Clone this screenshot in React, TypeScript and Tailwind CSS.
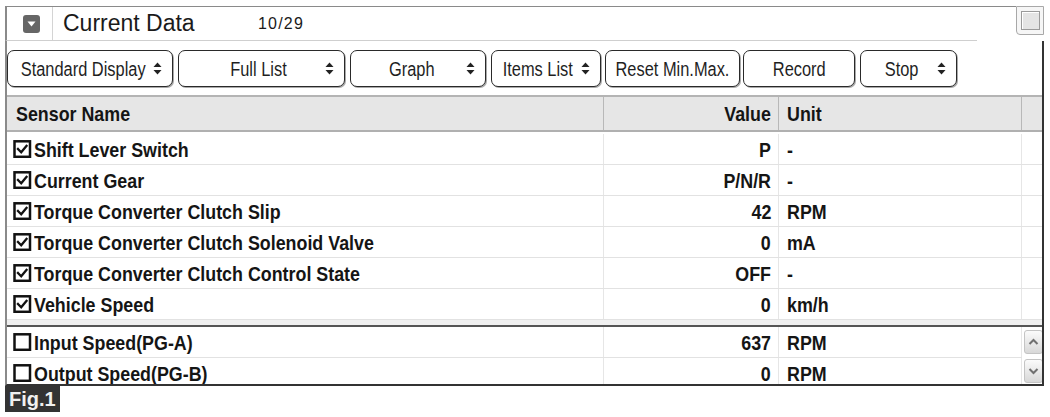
import React from "react";

const SANS = "font-['Liberation_Sans',Arial,sans-serif]";

const Spin = () => (
  <svg width="9" height="15" viewBox="0 0 9 15" className="shrink-0">
    <polygon points="0.5,6 4.5,1.5 8.5,6" fill="#222" />
    <polygon points="0.5,9 4.5,13.5 8.5,9" fill="#222" />
  </svg>
);

const Check = ({ checked }: { checked: boolean }) => (
  <svg width="19" height="18" viewBox="0 0 19 18" className="shrink-0">
    <rect x="1.5" y="1.3" width="15.5" height="15.5" fill="#fff" stroke="#111" strokeWidth="2.5" />
    {checked && (
      <path d="M5 9 L8.2 12.2 L13.5 5.8" fill="none" stroke="#111" strokeWidth="2.3" strokeLinecap="square" />
    )}
  </svg>
);

type Btn = { label: string; w: string; ml: string; spin: boolean; pl: string };

const buttons: Btn[] = [
  { label: "Standard Display", w: "w-[166px]", ml: "ml-0", spin: true, pl: "pl-[6px]" },
  { label: "Full List", w: "w-[167px]", ml: "ml-[5px]", spin: true, pl: "pl-[12px]" },
  { label: "Graph", w: "w-[136px]", ml: "ml-[5px]", spin: true, pl: "pl-[6px]" },
  { label: "Items List", w: "w-[110px]", ml: "ml-[5px]", spin: true, pl: "pl-[2px]" },
  { label: "Reset Min.Max.", w: "w-[135px]", ml: "ml-[4px]", spin: false, pl: "pl-0" },
  { label: "Record", w: "w-[112px]", ml: "ml-[3px]", spin: false, pl: "pl-0" },
  { label: "Stop", w: "w-[97px]", ml: "ml-[5px]", spin: true, pl: "pl-[6px]" },
];

type Row = { name: string; value: string; unit: string; checked: boolean };

const topRows: Row[] = [
  { name: "Shift Lever Switch", value: "P", unit: "-", checked: true },
  { name: "Current Gear", value: "P/N/R", unit: "-", checked: true },
  { name: "Torque Converter Clutch Slip", value: "42", unit: "RPM", checked: true },
  { name: "Torque Converter Clutch Solenoid Valve", value: "0", unit: "mA", checked: true },
  { name: "Torque Converter Clutch Control State", value: "OFF", unit: "-", checked: true },
  { name: "Vehicle Speed", value: "0", unit: "km/h", checked: true },
];

const bottomRows: Row[] = [
  { name: "Input Speed(PG-A)", value: "637", unit: "RPM", checked: false },
  { name: "Output Speed(PG-B)", value: "0", unit: "RPM", checked: false },
];

const BoldL = ({ children }: { children: React.ReactNode }) => (
  <span className="inline-block whitespace-nowrap origin-left scale-x-[0.85] text-[21px] font-bold leading-none">{children}</span>
);
const BoldR = ({ children }: { children: React.ReactNode }) => (
  <span className="inline-block whitespace-nowrap origin-right scale-x-[0.85] text-[21px] font-bold leading-none">{children}</span>
);

const DataRow = ({ r }: { r: Row }) => (
  <div className="flex h-[31px] shrink-0 border-b border-[#e2e2e2]">
    <div className="w-[597px] flex items-center pl-[6px] gap-[2px] border-r border-[#e6e6e6]">
      <Check checked={r.checked} />
      <BoldL>{r.name}</BoldL>
    </div>
    <div className="w-[175px] flex items-center justify-end pr-[7px] border-r border-[#e6e6e6]">
      <BoldR>{r.value}</BoldR>
    </div>
    <div className="w-[243px] flex items-center pl-[8px] border-r border-[#e6e6e6]">
      <BoldL>{r.unit}</BoldL>
    </div>
  </div>
);

const ScrollBtn = ({ up }: { up: boolean }) => (
  <div className="w-[19px] h-[24px] ml-[2px] rounded-[3px] border border-[#c4c4c4] bg-gradient-to-b from-[#fbfbfb] to-[#d8d8d8] flex items-center justify-center">
    <svg width="11" height="8" viewBox="0 0 11 8">
      <path d={up ? "M1.5 6 L5.5 2 L9.5 6" : "M1.5 2 L5.5 6 L9.5 2"} fill="none" stroke="#707070" strokeWidth="2" />
    </svg>
  </div>
);

export default function App() {
  return (
    <div className={`w-[1050px] h-[417px] bg-white pt-[6px] pl-[5px] overflow-hidden text-[#151515] ${SANS}`}>
      <div className="w-[1039px] flex flex-col">
        {/* Title row */}
        <div className="flex h-[35px]">
          <div className="w-[972px] flex border-t border-b border-l-2 border-t-[#8a8a8a] border-b-[#cfcfcf] border-l-[#8a8a8a]">
            <div className="w-[46px] flex items-center justify-center pl-[3px] border-r border-[#d4d4d4]">
              <div className="w-[17px] h-[18px] rounded-[3px] bg-[#666] flex items-center justify-center">
                <svg width="9" height="6" viewBox="0 0 9 6">
                  <polygon points="0.5,0.5 8.5,0.5 4.5,5.5" fill="#fff" />
                </svg>
              </div>
            </div>
            <span className="ml-[10px] w-[195px] self-center text-[23px] leading-none text-[#1a1a1a]">Current Data</span>
            <span className="self-center text-[16px] leading-none tracking-[1.2px] text-[#1a1a1a]">10/29</span>
          </div>
          <div className="flex-1 border-t border-[#8a8a8a]" />
          <div className="w-[28px] h-[29px] rounded-bl-[4px] border border-[#a8a8a8] bg-[#f6f6f6] flex items-center justify-center">
            <div className="w-[19px] h-[19px] border border-[#9a9a9a] bg-[#e4e4e4] shadow-[inset_1px_1px_0_#fff]" />
          </div>
        </div>

        {/* Buttons row */}
        <div className="h-[54px] flex items-start pt-[9px] border-l-2 border-r-2 border-l-[#8a8a8a] border-r-[#333]">
          {buttons.map((b) => (
            <div
              key={b.label}
              className={`${b.w} ${b.ml} h-[37px] shrink-0 rounded-[7px] border-[1.5px] border-[#2a2a2a] bg-white shadow-[1px_1px_0_#aaa] flex items-center`}
            >
              <span className={`flex-1 min-w-0 flex justify-center ${b.pl}`}>
                <span className="inline-block whitespace-nowrap origin-center scale-x-[0.82] text-[20px] leading-none text-[#1f1f1f]">
                  {b.label}
                </span>
              </span>
              {b.spin && (
                <span className="mr-[10px] flex">
                  <Spin />
                </span>
              )}
            </div>
          ))}
        </div>

        {/* Table */}
        <div className="h-[291px] flex flex-col overflow-hidden border-l-2 border-r-2 border-b-2 border-l-[#8a8a8a] border-r-[#333] border-b-[#333]">
          <div className="flex h-[37px] shrink-0 bg-[#e6e6e6] border-t-2 border-b-2 border-t-[#b4b4b4] border-b-[#b0b0b0]">
            <div className="w-[597px] flex items-center pl-[9px] border-r border-[#b8b8b8]">
              <BoldL>Sensor Name</BoldL>
            </div>
            <div className="w-[175px] flex items-center justify-end pr-[7px] border-r border-[#b8b8b8]">
              <BoldR>Value</BoldR>
            </div>
            <div className="w-[243px] flex items-center pl-[8px] border-r border-[#b8b8b8]">
              <BoldL>Unit</BoldL>
            </div>
            <div className="flex-1" />
          </div>

          <div className="flex flex-col pt-[2px] shrink-0">
            {topRows.map((r) => (
              <DataRow key={r.name} r={r} />
            ))}
          </div>
          <div className="h-[5px] shrink-0 bg-[#f0f0f0]" />
          <div className="h-[2px] shrink-0 bg-[#555]" />

          <div className="flex flex-1 overflow-hidden">
            <div className="flex flex-col">
              {bottomRows.map((r) => (
                <DataRow key={r.name} r={r} />
              ))}
            </div>
            <div className="flex-1 flex flex-col pt-[3px] gap-[5px]">
              <ScrollBtn up={true} />
              <ScrollBtn up={false} />
            </div>
          </div>
        </div>

        {/* Fig label */}
        <div className="w-[55px] h-[26px] bg-[#333] flex items-center pl-[4px]">
          <span className="text-[20px] font-bold leading-none text-[#f0f0f0]">Fig.1</span>
        </div>
      </div>
    </div>
  );
}
